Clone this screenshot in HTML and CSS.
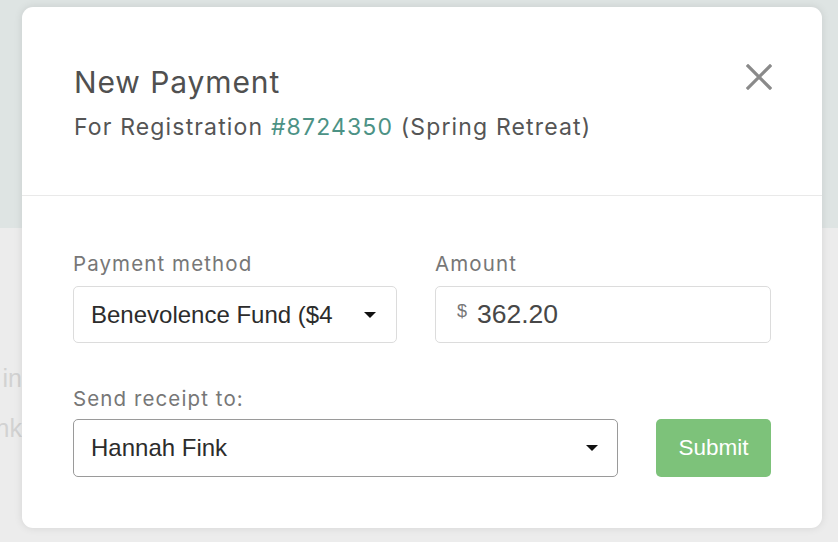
FILE: index.html
```html
<!DOCTYPE html>
<html>
<head>
<meta charset="utf-8">
<link rel="stylesheet" href="styles.css">
</head>
<body>
<div class="page">
  <div class="page-top"></div>
  <div class="page-main">
    <div class="bg-col">
      <div class="bg-line">Check in</div>
      <div class="bg-line">Hannah Fink</div>
    </div>
  </div>
</div>
<div class="modal">
  <div class="modal-head">
    <div class="titles">
      <h1 class="title">New Payment</h1>
      <p class="subtitle">For Registration <a class="link">#8724350</a> (Spring Retreat)</p>
    </div>
    <button class="close" aria-label="Close">
      <svg width="26" height="26" viewBox="0 0 26 26"><path d="M2 2 L24 24 M24 2 L2 24" stroke="#8a8a8a" stroke-width="3.2" stroke-linecap="square"/></svg>
    </button>
  </div>
  <div class="modal-body">
    <div class="row">
      <div class="field f-method">
        <label class="label">Payment method</label>
        <div class="select">
          <span class="sel-text">Benevolence Fund ($4</span>
          <span class="caret"></span>
        </div>
      </div>
      <div class="field f-amount">
        <label class="label">Amount</label>
        <div class="input">
          <span class="cur">$</span><span class="amt">362.20</span>
        </div>
      </div>
    </div>
    <div class="row row2">
      <div class="field f-receipt">
        <label class="label">Send receipt to:</label>
        <div class="select dark">
          <span class="sel-text">Hannah Fink</span>
          <span class="caret"></span>
        </div>
      </div>
      <button class="submit">Submit</button>
    </div>
  </div>
</div>
</body>
</html>
```
FILE: styles.css
```css
* { box-sizing: border-box; }
html, body { margin: 0; padding: 0; }
body {
  width: 838px;
  height: 542px;
  overflow: hidden;
  font-family: Inter, "Liberation Sans", Arial, sans-serif;
  background: #ececec;
}
.page { width: 838px; height: 542px; display: flex; flex-direction: column; }
.page-top { height: 228px; background: #dee4e3; }
.page-main { flex: 1; background: #ececec; }
.bg-col {
  width: 22px;
  overflow: hidden;
  padding-top: 137px;
  display: flex;
  flex-direction: column;
  align-items: flex-end;
  gap: 24px;
}
.bg-line {
  white-space: nowrap;
  color: #d2d2d2;
  font-family: "Liberation Sans", Arial, sans-serif;
  font-size: 25px;
  line-height: 26px;
}
.modal {
  position: absolute;
  left: 22px;
  top: 7px;
  width: 800px;
  height: 521px;
  background: #fff;
  border-radius: 11px;
  box-shadow: 0 0 8px rgba(0,0,0,0.10);
  display: flex;
  flex-direction: column;
}
.modal-head {
  height: 189px;
  border-bottom: 1px solid #e9e9e9;
  display: flex;
  justify-content: space-between;
  align-items: flex-start;
  padding: 56px 50px 0 52px;
}
.title {
  margin: 0;
  font-weight: normal;
  font-size: 30px;
  letter-spacing: 0.9px;
  line-height: 38px;
  color: #505050;
}
.subtitle {
  margin: 11px 0 0;
  font-size: 23px;
  letter-spacing: 1.15px;
  line-height: 30px;
  color: #555;
}
.link { color: #4c9285; text-decoration: none; }
.close {
  border: 0;
  background: none;
  padding: 0;
  margin-top: 1px;
  width: 26px;
  height: 26px;
  cursor: pointer;
}
.close svg { display: block; }
.modal-body { padding: 56px 51px 0 51px; }
.row { display: flex; gap: 38px; }
.row2 { margin-top: 44px; align-items: flex-end; }
.field { display: flex; flex-direction: column; }
.f-method { width: 324px; }
.f-amount { width: 336px; }
.f-receipt { width: 545px; }
.label {
  font-size: 20.5px;
  letter-spacing: 1.1px;
  line-height: 24px;
  height: 24px;
  color: #777;
  margin-bottom: 10px;
}
.row2 .label { margin-bottom: 8px; }
.select, .input {
  height: 57px;
  border: 1px solid #dcdcdc;
  border-radius: 5px;
  display: flex;
  align-items: center;
  padding: 0 0 0 17px;
  font-size: 24px;
  color: #333;
  background: #fff;
  font-family: "Liberation Sans", Arial, sans-serif;
}
.select {
  justify-content: space-between;
  padding-right: 20px;
  overflow: hidden;
}
.select.dark { border-color: #9a9a9a; height: 58px; padding-right: 19px; }
.sel-text { white-space: nowrap; color: #2c2c2c; }
.caret {
  width: 0; height: 0;
  border-left: 6px solid transparent;
  border-right: 6px solid transparent;
  border-top: 6px solid #111;
  flex: none;
}
.input { padding-left: 21px; }
.cur { font-size: 18px; color: #777; align-self: flex-start; margin-top: 14px; margin-right: 10px; }
.amt { color: #474747; font-size: 26.5px; }
.submit {
  width: 115px;
  height: 58px;
  border: 0;
  border-radius: 5px;
  background: #7dc27a;
  color: #fff;
  font-family: "Liberation Sans", Arial, sans-serif;
  font-size: 22.5px;
  padding: 0;
}
```
